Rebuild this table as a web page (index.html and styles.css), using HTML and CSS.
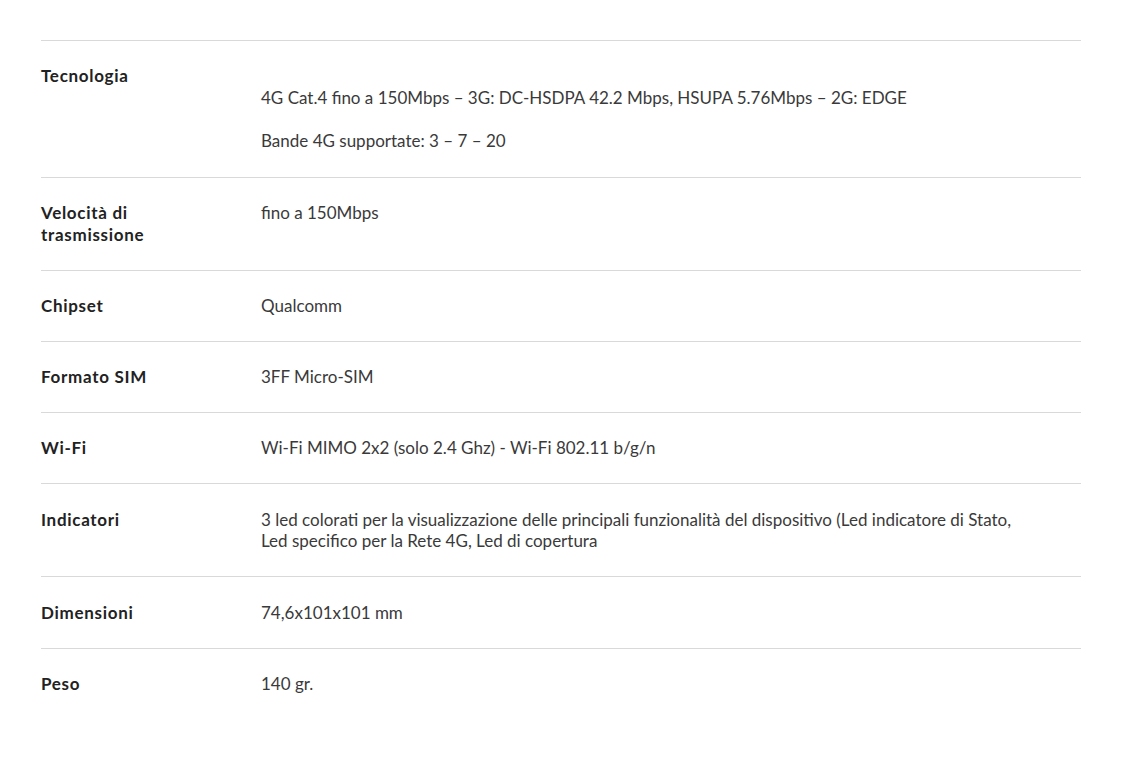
FILE: index.html
```html
<!DOCTYPE html>
<html lang="it">
<head>
<meta charset="utf-8">
<title>Caratteristiche tecniche</title>
<link rel="stylesheet" href="styles.css">
</head>
<body>
<div class="specs">
  <div class="row">
    <div class="label">Tecnologia</div>
    <div class="value">
      <p class="para">4G Cat.4 fino a 150Mbps – 3G: DC-HSDPA 42.2 Mbps, HSUPA 5.76Mbps – 2G: EDGE</p>
      <p class="para">Bande 4G supportate: 3 – 7 – 20</p>
    </div>
  </div>
  <div class="row">
    <div class="label">Velocità di<br>trasmissione</div>
    <div class="value">fino a 150Mbps</div>
  </div>
  <div class="row">
    <div class="label">Chipset</div>
    <div class="value">Qualcomm</div>
  </div>
  <div class="row">
    <div class="label">Formato SIM</div>
    <div class="value">3FF Micro-SIM</div>
  </div>
  <div class="row">
    <div class="label">Wi-Fi</div>
    <div class="value">Wi-Fi MIMO 2x2 (solo 2.4 Ghz) - Wi-Fi 802.11 b/g/n</div>
  </div>
  <div class="row">
    <div class="label">Indicatori</div>
    <div class="value">3 led colorati per la visualizzazione delle principali funzionalità del dispositivo (Led indicatore di Stato, Led specifico per la Rete 4G, Led di copertura</div>
  </div>
  <div class="row">
    <div class="label">Dimensioni</div>
    <div class="value">74,6x101x101 mm</div>
  </div>
  <div class="row last">
    <div class="label">Peso</div>
    <div class="value">140 gr.</div>
  </div>
</div>
</body>
</html>
```

FILE: styles.css
```css
html, body {
  margin: 0;
  padding: 0;
  background: #ffffff;
}
body {
  font-family: "Lato", "Liberation Sans", sans-serif;
  font-size: 17px;
  line-height: 21.75px;
  color: #333333;
}
.specs {
  margin: 40px 40px 0 41px;
  border-top: 1px solid #d9d9d9;
}
.row {
  display: grid;
  grid-template-columns: 220px 1fr;
  padding: 24.25px 0;
  border-bottom: 1px solid #d9d9d9;
}
.row.last {
  border-bottom: none;
}
.label {
  font-weight: 700;
  letter-spacing: 0.7px;
  color: #222222;
}
.value {
  max-width: 765px;
  color: #3a3a3a;
}
.para {
  margin: 21.5px 0 20px 0;
}
.para:last-child {
  margin-bottom: 0.5px;
}
```
